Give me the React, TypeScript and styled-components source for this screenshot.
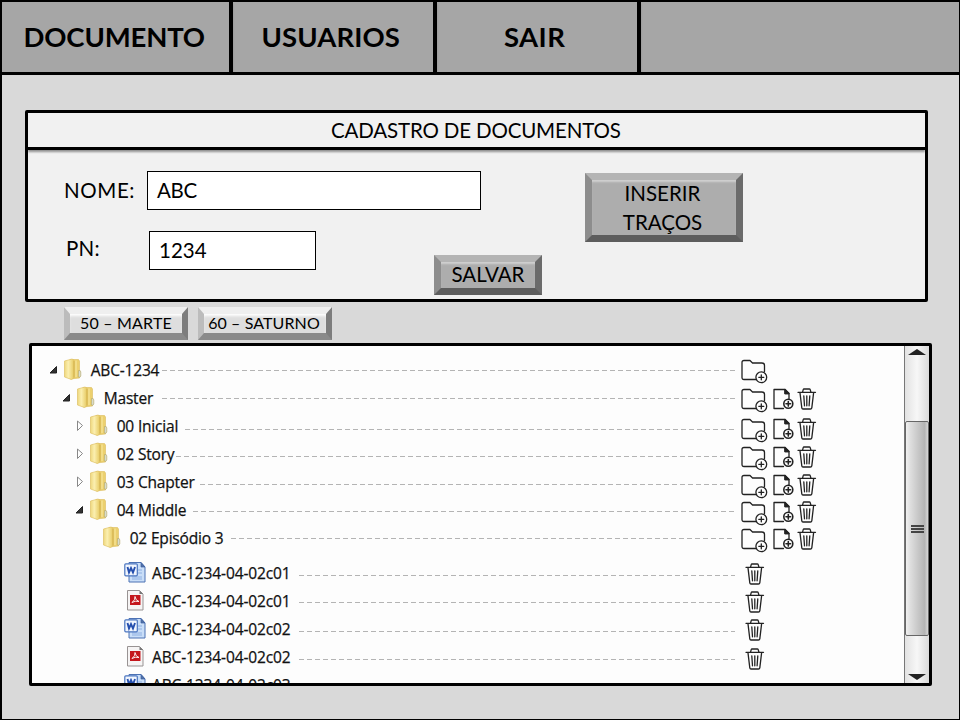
import React from 'react';
import styled, { createGlobalStyle, css } from 'styled-components';

const Global = createGlobalStyle`
  * { box-sizing: border-box; }
  body { margin: 0; font-family: Lato, "Liberation Sans", sans-serif; color: #000; }
`;

const Page = styled.div`
  width: 960px; height: 720px; background: #d9d9d9; overflow: hidden;
  border: solid #000; border-width: 2px 1px 1px 2px;
`;
const Menu = styled.nav`
  display: flex; height: 73px; background: #a6a6a6; border-bottom: 3px solid #000;
`;
const MenuItem = styled.a<{ $w: number; $pad: number }>`
  width: ${p => p.$w}px; padding: 18px 0 0 ${p => p.$pad}px; border-right: 4px solid #000;
  box-shadow: 0 2px 2px rgba(0,0,0,.15); white-space: nowrap;
  font-size: 27.5px; line-height: 34px; font-weight: 700;
`;
const Text = styled.span<{ $ls?: number }>`
  letter-spacing: ${p => p.$ls ?? 0}px; white-space: pre;
`;
const FormPanel = styled.section`
  width: 903px; height: 192px; margin: 35px 0 0 23px; background: #f1f1f1;
  border: 3px solid #000; border-radius: 2px;
`;
const FormTitle = styled.h1`
  margin: 0; height: 37px; padding: 5px 0 0 303px; border-bottom: 3px solid #000;
  box-shadow: 0 2px 2px rgba(0,0,0,.4); font-size: 20.5px; font-weight: 400; line-height: 25px;
`;
const FormBody = styled.div`
  display: grid; grid-template-columns: 397px 160px 1fr; height: 148px;
`;
const Fields = styled.div`padding: 21px 0 0 36px;`;
const Field = styled.label<{ $indent: number; $gap: number; $shift: number }>`
  display: flex; height: 39px; margin-bottom: ${p => p.$gap}px; padding-left: ${p => p.$indent}px;
  font-size: 20.5px; line-height: ${p => 39 + p.$shift}px;
`;
const FieldName = styled.span<{ $w: number }>`width: ${p => p.$w}px; flex: none;`;
const FieldBox = styled.span<{ $w: number }>`
  flex: none; width: ${p => p.$w}px; height: 39px; padding-left: 9px; line-height: 37px;
  border: 1px solid #000; background: #fff;
`;
const Bevel = styled.button<{ $w: number; $h: number; $light?: boolean }>`
  display: block; flex: none; width: ${p => p.$w}px; height: ${p => p.$h}px; margin: 0; padding: 0;
  font: 400 20.5px/29px Lato, sans-serif; color: #000; text-align: center; white-space: nowrap;
  border: 7px solid; border-color: #b4b4b4 #6b6b6b #5d5d5d #8d8d8d; background: #adadad;
  box-shadow: inset 0 3px 2px -1px #d0d0d0;
  ${p => p.$light && css`
    font-size: 16px; line-height: 19px;
    border-width: 7px 6px; border-color: #efefef #7d7d7d #8a8a8a #bcbcbc; background: #dedede;
    box-shadow: inset 0 3px 3px -1px #fff;
  `}
`;
const Caption = styled.span<{ $x?: number; $y: number }>`
  display: block; transform: translate(${p => p.$x ?? 0}px, ${p => p.$y}px);
`;
const SaveCell = styled.div`padding: 105px 0 0 9px;`;
const InsertCell = styled.div`padding: 23px 0 0 0;`;
const Tabs = styled.div`display: flex; gap: 10px; height: 33px; margin: 5px 0 3px 62px;`;
const TreePanel = styled.section`
  display: flex; width: 903px; height: 343px; margin-left: 27px; overflow: hidden;
  background: #fdfdfd; border: 3px solid #000; border-radius: 2px;
`;
const Rows = styled.div`flex: 1; padding-top: 10px; overflow: hidden;`;
const RowBox = styled.div<{ $indent: number; $gap: number }>`
  display: flex; height: 28px; margin-top: ${p => p.$gap}px; padding-left: ${p => p.$indent}px;
  font-family: "Open Sans", "Noto Sans", sans-serif; font-size: 15.5px; line-height: 28px; color: #111;
  -webkit-text-stroke: .25px #111;
`;
const Arrow = styled.svg`width: 10px; height: 12px; margin: 8px 4px 0 0; flex: none;`;
const Glyph = styled.svg`width: 22px; height: 24px; margin-top: 1px; flex: none;`;
const RowLabel = styled.span<{ $w: number; $pad: number }>`
  flex: none; width: ${p => p.$w}px; padding-left: ${p => p.$pad}px; white-space: nowrap;
`;
const Leader = styled.i<{ $y: number }>`
  flex: 1; height: 1px; margin-top: ${p => p.$y}px;
  background: repeating-linear-gradient(90deg, #b4b4b4 0 5px, transparent 5px 8px);
`;
const Actions = styled.span<{ $y: number; $pad: number }>`
  display: flex; flex: none; width: 169px; padding-left: ${p => p.$pad}px; margin-top: ${p => p.$y}px; height: 24px;
`;
const ActionIcon = styled.svg<{ $w: number; $mr: number }>`
  width: ${p => p.$w}px; height: 24px; margin-right: ${p => p.$mr}px; flex: none; overflow: visible;
  fill: none; stroke: #222; stroke-width: 1.3; stroke-linejoin: round; stroke-linecap: round;
`;
const Scrollbar = styled.div`
  display: flex; flex-direction: column; width: 25px; border-left: 1px solid #777; flex: none;
  background: linear-gradient(90deg, #e2e2e2, #f7f7f7 50%, #dadada);
`;
const ScrollEnd = styled.svg<{ $h: number }>`width: 24px; height: ${p => p.$h}px; flex: none;`;
const Thumb = styled.div`
  display: flex; flex-direction: column; align-items: center; justify-content: center; gap: 1px;
  height: 215px; border: 1px solid #666; border-radius: 2px;
  background: linear-gradient(90deg, #f0f0f0 0, #dedede 20%, #b4b4b4 85%, #d8d8d8);
`;
const Grip = styled.i`width: 13px; height: 2px; background: #444;`;

const FolderAdd = () => (
  <ActionIcon $w={27} $mr={5} viewBox="0 .5 27 24">
    <path d="M15 20H3Q1 20 1 18V3Q1 1 3 1H9L11.5 3.500H21Q23.500 3.500 23.500 6V12" />
    <circle cx="20.300" cy="17.800" r="5.400" /><path d="M17.800 17.800H22.800M20.300 15.300V20.300" />
  </ActionIcon>
);
const FileAdd = () => (
  <ActionIcon $w={21} $mr={3} viewBox="0 .5 21 24">
    <path d="M10.500 20H1V1H12L16 5V10.500M12 1V5H16" /><path d="M12 1L16 5H12Z" fill="#222" />
    <circle cx="15.300" cy="15.300" r="4.500" strokeWidth="1.600" /><path d="M13 15.300H17.600M15.300 13V17.600" strokeWidth="1.600" />
  </ActionIcon>
);
const Trash = () => (
  <ActionIcon $w={20} $mr={0} viewBox="0 .7 20 24">
    <path d="M1 4H18.500M5.500 4L6.200 1.300Q6.400 .7 7 .7H12.300Q13 .7 13.200 1.300L14 4M3 4.500L4.800 19.500Q5 20.700 6 20.700H13.500Q14.600 20.700 14.800 19.500L16.600 4.500M6.800 7.500L7.500 17.500M9.800 7.500V17.500M12.800 7.500L12.100 17.500" />
  </ActionIcon>
);
const Folder = () => (
  <Glyph viewBox="0 0 22 24">
    <defs><linearGradient id="fold" x2="1"><stop stopColor="#eed77c" /><stop offset=".4" stopColor="#fbefb0" /><stop offset="1" stopColor="#e6c95f" /></linearGradient></defs>
    <path d="M8 2.500H16.500L17.500 4V21L8 22Z" fill="#ecd06e" stroke="#dcbc5c" strokeWidth=".6" />
    <path d="M2.500 4L10 2L12 3V21L9.500 22.500L2.500 20Z" fill="url(#fold)" stroke="#dfc266" strokeWidth=".7" />
    <path d="M12 4V20.500" stroke="#cfac49" strokeWidth=".8" /><path d="M14 3.500V20" stroke="#f8e9a2" />
    <path d="M16.500 13.500Q18.800 13 18.800 15V19Q18.300 21 16.300 20Z" fill="#d8dccb" stroke="#b3a561" strokeWidth=".6" />
  </Glyph>
);
const Word = () => (
  <Glyph viewBox="0 0 22 24">
    <path d="M5 2.500H17L21 7V22H5Z" fill="#c9def8" stroke="#4d72b4" /><path d="M17 2.500V7H21Z" fill="#5371a4" stroke="#3c62a8" strokeWidth=".7" />
    <path d="M8 19H18M8 17H18M14 10H18M14 13H18" stroke="#8fb0e2" />
    <rect x=".8" y="3.800" width="12.500" height="12" rx="1" fill="#f1f6fe" stroke="#4a74bf" strokeWidth="1.200" />
    <path d="M3.500 7L5 12.500L7 8L9 12.500L11 7" fill="none" stroke="#254fae" strokeWidth="1.900" />
  </Glyph>
);
const Pdf = () => (
  <Glyph viewBox="0 0 22 24">
    <path d="M3.500 2.500H15.500L19 6V22H3.500Z" fill="#f6f4f4" stroke="#989393" /><path d="M15.500 2.500V6H19Z" fill="#777" />
    <rect x="6" y="7" width="10.500" height="10" fill="#c4161c" />
    <path d="M8 14.500Q11.500 12 11 8.500Q11.500 12.500 15 13.500Q11 12.500 8 14.500Z" fill="none" stroke="#fff" strokeWidth=".9" />
  </Glyph>
);

type Row = {
  kind: 'folder' | 'word' | 'pdf'; text: string; indent: number; start: number; line: number; act: number;
  arrow?: 'open' | 'closed'; only?: 'folder' | 'trash' | 'none'; gap?: number;
};
const rows: Row[] = [
  { kind: 'folder', text: 'ABC-1234', indent: 16, start: 162, line: 14, act: 4, arrow: 'open', only: 'folder' },
  { kind: 'folder', text: 'Master', indent: 29, start: 162, line: 14, act: 5, arrow: 'open' },
  { kind: 'folder', text: '00 Inicial', indent: 42, start: 185, line: 17, act: 7, arrow: 'closed' },
  { kind: 'folder', text: '02 Story', indent: 42, start: 176, line: 16, act: 7, arrow: 'closed' },
  { kind: 'folder', text: '03 Chapter', indent: 42, start: 200, line: 16, act: 7, arrow: 'closed' },
  { kind: 'folder', text: '04 Middle', indent: 42, start: 193, line: 15, act: 6, arrow: 'open' },
  { kind: 'folder', text: '02 Episódio 3', indent: 69, start: 231, line: 14, act: 5 },
  { kind: 'word', text: 'ABC-1234-04-02c01', indent: 92, start: 299, line: 16, act: 5, only: 'trash', gap: 7 },
  { kind: 'pdf', text: 'ABC-1234-04-02c01', indent: 92, start: 299, line: 15, act: 5, only: 'trash' },
  { kind: 'word', text: 'ABC-1234-04-02c02', indent: 92, start: 299, line: 16, act: 5, only: 'trash' },
  { kind: 'pdf', text: 'ABC-1234-04-02c02', indent: 92, start: 299, line: 16, act: 6, only: 'trash' },
  { kind: 'word', text: 'ABC-1234-04-02c03', indent: 92, start: 299, line: 16, act: 4, only: 'none' },
];
const glyphs = { folder: Folder, word: Word, pdf: Pdf };

const TreeRow = ({ row }: { row: Row }) => {
  const Icon = glyphs[row.kind];
  const isFolder = row.kind === 'folder';
  const used = 32 + row.indent + (row.arrow ? 14 : 0) + 22;
  return (
    <RowBox $indent={row.indent} $gap={row.gap ?? 0}>
      {row.arrow && <Arrow viewBox="0 0 10 12">{row.arrow === 'open'
        ? <path d="M8.500 2.500V9H2Z" fill="#333" stroke="#222" />
        : <path d="M3.500 1L8.500 5.500L3.500 10.500Z" fill="#fff" stroke="#888" />}</Arrow>}
      <Icon />
      <RowLabel $w={row.start - used} $pad={isFolder ? 6.7 : 6}>
        <Text $ls={isFolder ? -0.18 : -0.12}>{row.text}</Text>
      </RowLabel>
      {row.only !== 'none' && <>
        <Leader $y={row.line} />
        <Actions $y={row.act} $pad={row.only === 'trash' ? 10 : 6}>
          {row.only !== 'trash' && <FolderAdd />}
          {!row.only && <FileAdd />}
          {row.only !== 'folder' && <Trash />}
        </Actions>
      </>}
    </RowBox>
  );
};

export default function App() {
  return (
    <>
      <Global />
      <Page>
        <Menu>
          <MenuItem $w={231} $pad={21.5}><Text $ls={-0.15}>DOCUMENTO</Text></MenuItem>
          <MenuItem $w={204} $pad={28.5}><Text $ls={0.1}>USUARIOS</Text></MenuItem>
          <MenuItem $w={204} $pad={67}><Text $ls={0.4}>SAIR</Text></MenuItem>
        </Menu>
        <FormPanel>
          <FormTitle><Text $ls={-0.16}>CADASTRO DE DOCUMENTOS</Text></FormTitle>
          <FormBody>
            <Fields>
              <Field $indent={0} $gap={21} $shift={0}>
                <FieldName $w={83}><Text $ls={0.6}>NOME:</Text></FieldName>
                <FieldBox $w={334}><Text $ls={-0.3}>ABC</Text></FieldBox>
              </Field>
              <Field $indent={2} $gap={0} $shift={-4}>
                <FieldName $w={83}><Text $ls={0.3}>PN:</Text></FieldName>
                <FieldBox $w={167}><Text>1234</Text></FieldBox>
              </Field>
            </Fields>
            <SaveCell><Bevel $w={108} $h={40}><Caption $y={-2}><Text>SALVAR</Text></Caption></Bevel></SaveCell>
            <InsertCell>
              <Bevel $w={158} $h={69}>
                <Caption $x={-1.5} $y={-1}><Text>INSERIR</Text><br /><Text>TRAÇOS</Text></Caption>
              </Bevel>
            </InsertCell>
          </FormBody>
        </FormPanel>
        <Tabs>
          <Bevel $light $w={124} $h={33}><Caption $y={-1}><Text $ls={0.2}>50 – MARTE</Text></Caption></Bevel>
          <Bevel $light $w={134} $h={33}><Caption $x={-1} $y={-1}><Text $ls={0.1}>60 – SATURNO</Text></Caption></Bevel>
        </Tabs>
        <TreePanel>
          <Rows>{rows.map((r, i) => <TreeRow key={i} row={r} />)}</Rows>
          <Scrollbar>
            <ScrollEnd $h={75} viewBox="0 0 24 75"><path d="M3 9L12 3L21 9Z" fill="#222" /></ScrollEnd>
            <Thumb><Grip /><Grip /><Grip /></Thumb>
            <ScrollEnd $h={47} viewBox="0 0 24 47"><path d="M3 38L12 44L21 38Z" fill="#222" /></ScrollEnd>
          </Scrollbar>
        </TreePanel>
      </Page>
    </>
  );
}
